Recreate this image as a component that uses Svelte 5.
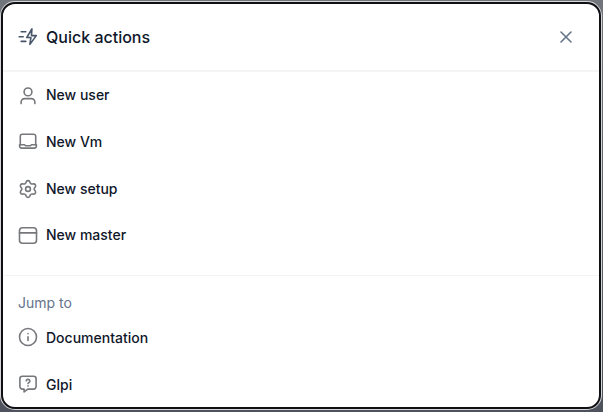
<script>
	let open = true;

	const actions = [
		{ icon: 'user', label: 'New user' },
		{ icon: 'laptop', label: 'New Vm' },
		{ icon: 'settings', label: 'New setup' },
		{ icon: 'window', label: 'New master' }
	];

	const links = [
		{ icon: 'info', label: 'Documentation' },
		{ icon: 'help', label: 'Glpi' }
	];

	function close() {
		open = false;
	}
</script>

<div class="backdrop">
	{#if open}
		<div class="modal" role="dialog" aria-label="Quick actions">
			<header>
				<svg class="bolt" viewBox="0 0 20 20">
					<path d="m13.9 1.9-5.1 8.6h4.1l-1 6.9 6.4-8.8h-4.8z" />
					<path d="M3.2 4.7h4.6M1.2 9.7h4M3.2 14.4h4.6" />
				</svg>
				<h1>Quick actions</h1>
				<button class="close" aria-label="Close" on:click={close}>
					<svg viewBox="0 0 12 12"><path d="m1 1 10 10M11 1 1 11" /></svg>
				</button>
			</header>

			<ul class="actions">
				{#each actions as action}
					<li>
						<button>
							<svg viewBox="0 0 20 20">
								{#if action.icon === 'user'}
									<circle cx="10" cy="5.9" r="3.9" />
									<path d="M3.1 17.6v-1.4a3.6 3.6 0 0 1 3.6-3.6h6.6a3.6 3.6 0 0 1 3.6 3.6v1.4" />
								{:else if action.icon === 'laptop'}
									<path d="M2.3 12.8V4.2a2 2 0 0 1 2-2h11.4a2 2 0 0 1 2 2v8.6" />
									<path
										d="M1.6 12.8h4.9l1 1h5l1-1h4.9v1.3a2 2 0 0 1-2 2H3.6a2 2 0 0 1-2-2z"
									/>
								{:else if action.icon === 'settings'}
									<path
										d="m7.8 16.1.5 1.2a1.9 1.9 0 0 0 3.4 0l.5-1.2a2 2 0 0 1 2.1-1.1l1.3.1a1.9 1.9 0 0 0 1.7-3l-.8-1a2 2 0 0 1 0-2.2l.8-1a1.9 1.9 0 0 0-1.7-3l-1.3.1a2 2 0 0 1-2.1-1.1l-.5-1.2a1.9 1.9 0 0 0-3.4 0l-.5 1.2A2 2 0 0 1 5.7 5l-1.3-.1a1.9 1.9 0 0 0-1.7 3l.8 1a2 2 0 0 1 0 2.2l-.8 1a1.9 1.9 0 0 0 1.7 3l1.3-.1a2 2 0 0 1 2.1 1.1z"
									/>
									<circle cx="10" cy="10" r="2.4" />
								{:else}
									<rect x="1.5" y="1.8" width="17" height="15.4" rx="3" />
									<path d="M1.5 6.9h17" />
								{/if}
							</svg>
							{action.label}
						</button>
					</li>
				{/each}
			</ul>

			<section>
				<h2>Jump to</h2>
				<ul>
					{#each links as link}
						<li>
							<button>
								<svg viewBox="0 0 20 20">
									{#if link.icon === 'info'}
										<circle cx="10" cy="10" r="8.5" />
										<path d="M10 9.7v3.7M10 6.5v.3" />
									{:else}
										<path
											d="M4.4 2.2h11.2A2.5 2.5 0 0 1 18.1 4.7v7.9a2.5 2.5 0 0 1-2.5 2.5H9.8l-3.7 2.8v-2.8H4.4a2.5 2.5 0 0 1-2.5-2.5V4.7a2.5 2.5 0 0 1 2.5-2.5z"
										/>
										<path d="M8.2 6.7a1.9 1.9 0 0 1 3.7.5c0 1.3-1.9 1.4-1.9 2.4M10 11.9v.2" />
									{/if}
								</svg>
								{link.label}
							</button>
						</li>
					{/each}
				</ul>
			</section>
		</div>
	{/if}
</div>

<style>
	:global(body) {
		margin: 0;
		overflow: hidden;
	}

	.backdrop {
		box-sizing: border-box;
		height: 412px;
		padding: 2px 2px 3px 1px;
		background: linear-gradient(#72757c, #4d525d);
	}

	.modal {
		box-sizing: border-box;
		height: 407px;
		border: 2px solid #101014;
		border-radius: 14px;
		box-shadow: 0 0 0 1px #d5d6d8;
		background: white;
		color: #0f172a;
		font-family: Inter, sans-serif;
	}

	header {
		box-sizing: border-box;
		display: flex;
		align-items: center;
		height: 68px;
		padding: 0 27px 0 15px;
		border-bottom: 2px solid #f4f4f5;
	}

	h1 {
		flex: 1;
		margin: 0 0 0 8px;
		font-size: 16px;
		font-weight: 500;
	}

	h2 {
		margin: 0;
		padding: 0 15px;
		color: #64748b;
		font-size: 14px;
		font-weight: 400;
		line-height: 20px;
	}

	ul {
		margin: 0;
		padding: 0;
		list-style: none;
	}

	.actions {
		height: 203.6px;
		margin-top: -0.6px;
		border-bottom: 1px solid #f4f4f5;
	}

	section {
		padding-top: 17px;
	}

	section ul {
		padding-top: 1px;
	}

	button {
		padding: 0;
		border: none;
		background: none;
		color: inherit;
		font: inherit;
		cursor: pointer;
	}

	li button {
		display: flex;
		align-items: center;
		gap: 8px;
		width: 100%;
		height: 46.7px;
		padding: 0 15px;
		font-size: 14px;
		font-weight: 500;
	}

	svg {
		display: block;
		flex: none;
		width: 20px;
		height: 20px;
		fill: none;
		stroke: #77787b;
		stroke-width: 1.6;
		stroke-linecap: round;
		stroke-linejoin: round;
	}

	.actions svg {
		margin-top: 1.6px;
	}

	.bolt {
		stroke: #475569;
	}

	.close svg {
		width: 12px;
		height: 12px;
		stroke: #64748b;
	}
</style>
